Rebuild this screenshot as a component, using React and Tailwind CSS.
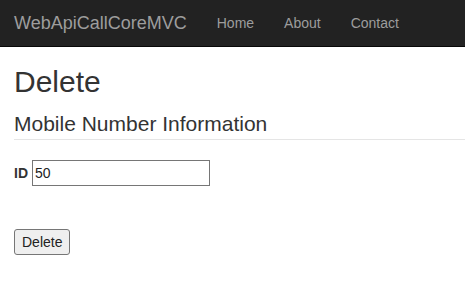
export default function App() {
  return (
    <div className="min-h-[283px] bg-white text-[14px] text-[#333] font-['Liberation_Sans',Arial,sans-serif]">
      <nav className="flex h-[47px] items-center border-b border-[#080808] bg-[#222]">
        <a className="pl-[14px] pr-[15px] text-[18px] text-[#9d9d9d]">WebApiCallCoreMVC</a>
        <ul className="flex">
          <li className="px-[15px] text-[#9d9d9d]">Home</li>
          <li className="px-[15px] text-[#9d9d9d]">About</li>
          <li className="px-[15px] text-[#9d9d9d]">Contact</li>
        </ul>
      </nav>

      <main className="pl-[14px]">
        <h2 className="mt-[18px] text-[30px] leading-[33px]">Delete</h2>
        <h4 className="mt-[14px] text-[21px] leading-[23px]">Mobile Number Information</h4>
        <hr className="mt-[4px] border-[#e5e5e5]" />

        <div className="mt-[20px] flex items-center gap-[4px]">
          <label className="font-bold text-[14px]">ID</label>
          <input
            className="h-[26px] w-[178px] border border-[#767676] px-[2px] text-[14px] text-[#222]"
            defaultValue="50"
          />
        </div>

        <button className="mt-[43px] h-[26px] rounded-[3px] border border-[#767676] bg-[#efefef] px-[7px] text-[14px] text-[#222]">
          Delete
        </button>
      </main>
    </div>
  );
}
